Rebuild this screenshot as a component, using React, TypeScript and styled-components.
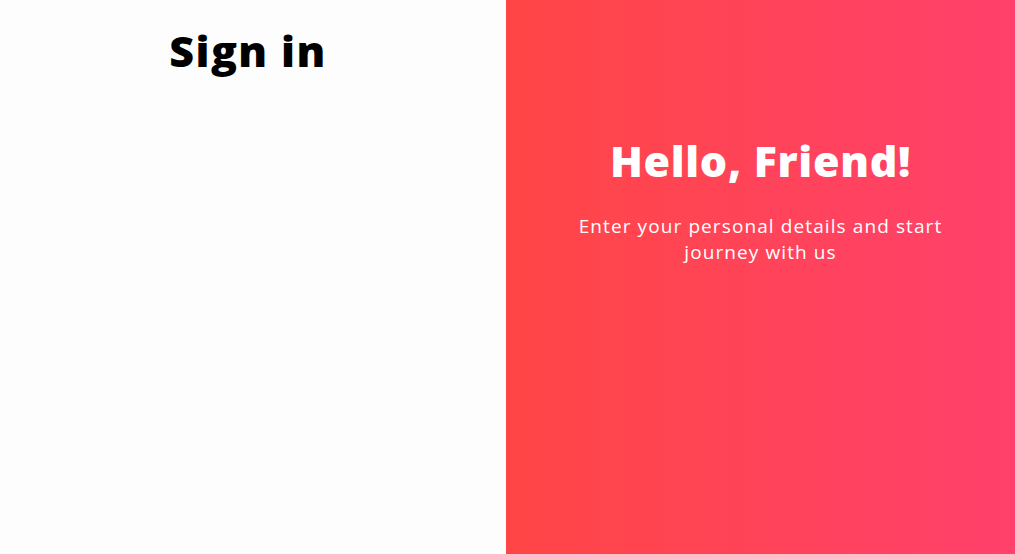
import React from "react";
import styled, { createGlobalStyle } from "styled-components";

const Global = createGlobalStyle`
  html, body { margin: 0; padding: 0; }
  body { font-family: "Open Sans", "Liberation Sans", sans-serif; }
`;

const Page = styled.div`
  display: flex;
  width: 100vw;
  height: 100vh;
  overflow: hidden;
`;

const FormPanel = styled.section`
  width: 506px;
  flex: none;
  background: #fdfdfd;
  display: flex;
  flex-direction: column;
  align-items: center;
  padding: 26px 10px 0 0;
  box-sizing: border-box;
`;

const OverlayPanel = styled.section`
  flex: 1;
  background: linear-gradient(to right, #ff4646, #ff416c);
  color: #ffffff;
  display: flex;
  flex-direction: column;
  align-items: center;
  text-align: center;
  padding: 136px 0 0 0;
  box-sizing: border-box;
`;

const Title = styled.h1<{ $color: string; $spacing: number }>`
  margin: 0;
  font-family: "Open Sans", "Liberation Sans", sans-serif;
  font-weight: 800;
  font-size: 43px;
  line-height: 50px;
  color: ${(p) => p.$color};
  letter-spacing: ${(p) => p.$spacing}px;
`;

const Text = styled.p`
  margin: 27px 0 0 0;
  width: 420px;
  font-family: "Open Sans", "Liberation Sans", sans-serif;
  font-size: 19px;
  line-height: 26px;
  letter-spacing: 1.1px;
  font-weight: 400;
`;

export default function App() {
  return (
    <>
      <Global />
      <Page>
        <FormPanel>
          <Title $color="#000000" $spacing={1.4}>Sign in</Title>
        </FormPanel>
        <OverlayPanel>
          <Title $color="#ffffff" $spacing={0.65}>Hello, Friend!</Title>
          <Text>Enter your personal details and start journey with us</Text>
        </OverlayPanel>
      </Page>
    </>
  );
}
